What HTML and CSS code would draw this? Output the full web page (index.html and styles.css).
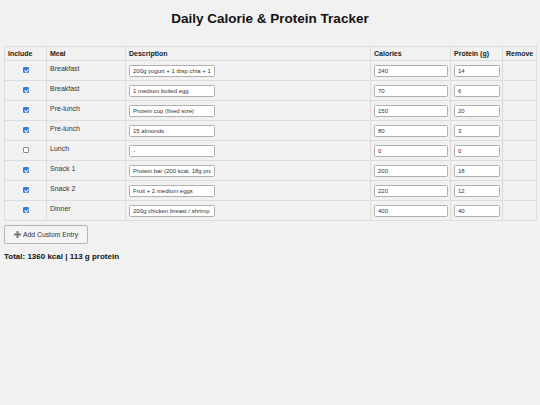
FILE: index.html
```html
<!DOCTYPE html>
<html>
<head>
<meta charset="utf-8">
<link rel="stylesheet" href="styles.css">
</head>
<body>
<h1 class="title">Daily Calorie &amp; Protein Tracker</h1>
<table class="tracker">
  <colgroup>
    <col class="c-inc"><col class="c-meal"><col class="c-desc"><col class="c-cal"><col class="c-pro"><col class="c-rem">
  </colgroup>
  <thead>
    <tr><th>Include</th><th>Meal</th><th>Description</th><th>Calories</th><th>Protein (g)</th><th>Remove</th></tr>
  </thead>
  <tbody>
    <tr><td class="inc"><input type="checkbox" class="chk" checked></td><td class="meal">Breakfast</td><td><input class="txt desc" value="200g yogurt + 1 tbsp chia + 1 tbsp honey"></td><td><input class="txt cal" value="240"></td><td><input class="txt pro" value="14"></td><td></td></tr>
    <tr><td class="inc"><input type="checkbox" class="chk" checked></td><td class="meal">Breakfast</td><td><input class="txt desc" value="1 medium boiled egg"></td><td><input class="txt cal" value="70"></td><td><input class="txt pro" value="6"></td><td></td></tr>
    <tr><td class="inc"><input type="checkbox" class="chk" checked></td><td class="meal">Pre-lunch</td><td><input class="txt desc" value="Protein cup (fixed size)"></td><td><input class="txt cal" value="150"></td><td><input class="txt pro" value="20"></td><td></td></tr>
    <tr><td class="inc"><input type="checkbox" class="chk" checked></td><td class="meal">Pre-lunch</td><td><input class="txt desc" value="15 almonds"></td><td><input class="txt cal" value="80"></td><td><input class="txt pro" value="3"></td><td></td></tr>
    <tr><td class="inc"><input type="checkbox" class="chk"></td><td class="meal">Lunch</td><td><input class="txt desc" value="-"></td><td><input class="txt cal" value="0"></td><td><input class="txt pro" value="0"></td><td></td></tr>
    <tr><td class="inc"><input type="checkbox" class="chk" checked></td><td class="meal">Snack 1</td><td><input class="txt desc" value="Protein bar (200 kcal, 18g protein)"></td><td><input class="txt cal" value="200"></td><td><input class="txt pro" value="18"></td><td></td></tr>
    <tr><td class="inc"><input type="checkbox" class="chk" checked></td><td class="meal">Snack 2</td><td><input class="txt desc" value="Fruit + 2 medium eggs"></td><td><input class="txt cal" value="220"></td><td><input class="txt pro" value="12"></td><td></td></tr>
    <tr><td class="inc"><input type="checkbox" class="chk" checked></td><td class="meal">Dinner</td><td><input class="txt desc" value="200g chicken breast / shrimp / fish"></td><td><input class="txt cal" value="400"></td><td><input class="txt pro" value="40"></td><td></td></tr>
  </tbody>
</table>
<button class="add-btn"><svg class="plus" width="7" height="7" viewBox="0 0 7 7"><rect x="2.5" y="0" width="2" height="7" fill="#7a7a7a"/><rect x="0" y="2.5" width="7" height="2" fill="#7a7a7a"/></svg>Add Custom Entry</button>
<p class="total">Total: 1360 kcal | 113 g protein</p>
</body>
</html>
```
FILE: styles.css
```css
html, body {
  background: #f1f1f1;
}
body {
  margin: 0;
  padding: 4px;
  font-family: "Liberation Sans", Arial, sans-serif;
  color: #222;
}
.title {
  font-size: 13.5px;
  line-height: 16px;
  font-weight: bold;
  text-align: center;
  margin: 7px 0 19px;
  color: #111;
}
.tracker {
  width: 532px;
  border-collapse: collapse;
  table-layout: fixed;
}
.c-inc { width: 42px; }
.c-meal { width: 79px; }
.c-desc { width: 245px; }
.c-cal { width: 80px; }
.c-pro { width: 52px; }
.c-rem { width: 34px; }
.tracker th, .tracker td {
  border: 1px solid #dcdcdc;
  text-align: left;
  vertical-align: top;
  font-size: 7px;
}
.tracker th {
  font-weight: bold;
  line-height: 7px;
  padding: 3px;
  color: #222;
}
.tracker td {
  padding: 0 3px;
  height: 19px;
  line-height: 8px;
  color: #333;
}
.tracker td.meal {
  padding-top: 4px;
  height: 15px;
}
.tracker td > .txt {
  margin-top: 4px;
}
.tracker td.inc {
  text-align: center;
  font-size: 0;
  line-height: 0;
}
.chk {
  appearance: none;
  -webkit-appearance: none;
  display: inline-block;
  width: 6px;
  height: 6px;
  margin: 6px 0 0;
  border: 1px solid #8a8a8a;
  border-radius: 1px;
  background: #fff;
  vertical-align: top;
  position: relative;
}
.chk:checked {
  border-color: #2f7de1;
  background: #2f7de1;
}
.chk:checked::after {
  content: "";
  position: absolute;
  left: 1.5px;
  top: 0px;
  width: 1.5px;
  height: 3px;
  border: solid #fff;
  border-width: 0 1px 1px 0;
  transform: rotate(40deg);
}
.txt {
  display: block;
  box-sizing: border-box;
  height: 12px;
  margin: 0;
  padding: 0 3px;
  border: 1px solid #b0b0b0;
  border-radius: 1.5px;
  background: #fff;
  font-family: "Liberation Sans", Arial, sans-serif;
  font-size: 6px;
  line-height: 10px;
  color: #333;
  outline: none;
}
.desc { width: 86px; }
.cal { width: 74px; }
.pro { width: 46px; }
.add-btn {
  display: flex;
  align-items: center;
  gap: 2px;
  margin-top: 4px;
  height: 19px;
  width: 84px;
  box-sizing: border-box;
  padding: 0 0 0 9px;
  border: 1px solid #b5b5b5;
  border-radius: 2px;
  background: #f4f4f4;
  font-family: "Liberation Sans", Arial, sans-serif;
  font-size: 6.8px;
  color: #333;
}
.plus {
  display: block;
}
.total {
  margin: 8px 0 0;
  font-size: 8px;
  line-height: 10px;
  font-weight: bold;
  color: #111;
}
```
